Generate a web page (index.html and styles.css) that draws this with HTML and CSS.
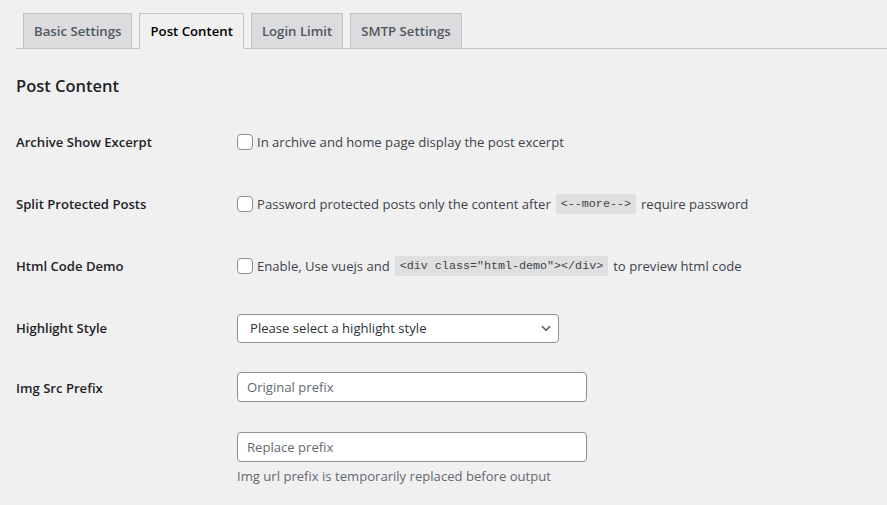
FILE: index.html
```html
<!DOCTYPE html>
<html lang="en">
<head>
<meta charset="utf-8">
<title>Post Content</title>
<link rel="stylesheet" href="styles.css">
</head>
<body>
<div class="wrap">
  <nav class="tabs">
    <a class="tab">Basic Settings</a>
    <a class="tab tab-active">Post Content</a>
    <a class="tab">Login Limit</a>
    <a class="tab">SMTP Settings</a>
  </nav>
  <h2 class="title">Post Content</h2>
  <div class="form">
    <div class="row">
      <div class="label">Archive Show Excerpt</div>
      <div class="field"><label class="check"><span class="box"></span>In archive and home page display the post excerpt</label></div>
    </div>
    <div class="row">
      <div class="label">Split Protected Posts</div>
      <div class="field"><label class="check"><span class="box"></span>Password protected posts only the content after <code>&lt;--more--&gt;</code> require password</label></div>
    </div>
    <div class="row">
      <div class="label">Html Code Demo</div>
      <div class="field"><label class="check"><span class="box"></span>Enable, Use vuejs and <code>&lt;div class="html-demo"&gt;&lt;/div&gt;</code> to preview html code</label></div>
    </div>
    <div class="row">
      <div class="label">Highlight Style</div>
      <div class="field">
        <div class="select">
          <span>Please select a highlight style</span>
          <svg class="chev" width="10" height="7" viewBox="0 0 10 7"><path d="M1 1.2 L5 5.2 L9 1.2" fill="none" stroke="#50575e" stroke-width="1.6"/></svg>
        </div>
      </div>
    </div>
    <div class="row row-last">
      <div class="label label-top">Img Src Prefix</div>
      <div class="field field-stack">
        <div class="input">Original prefix</div>
        <div class="input">Replace prefix</div>
        <p class="desc">Img url prefix is temporarily replaced before output</p>
      </div>
    </div>
  </div>
</div>
</body>
</html>
```

FILE: styles.css
```css
* { box-sizing: border-box; }
html, body { margin: 0; padding: 0; }
body {
  background: #f0f0f1;
  font-family: "Open Sans", "Noto Sans", sans-serif;
  color: #3c434a;
  width: 887px;
  height: 505px;
  overflow: hidden;
}
.wrap { padding: 13px 0 0 16px; }
.tabs {
  display: flex;
  border-bottom: 1px solid #c3c4c7;
  padding-left: 7px;
  gap: 7px;
  height: 36px;
}
.tab {
  display: block;
  height: 36px;
  padding: 0 10px;
  line-height: 34px;
  font-size: 13.2px;
  font-weight: 600;
  color: #50575e;
  background: #dcdcde;
  border: 1px solid #c3c4c7;
  white-space: nowrap;
}
.tab-active {
  background: #f0f0f1;
  color: #000;
  border-bottom-color: #f0f0f1;
}
.title {
  margin: 0;
  padding-top: 26px;
  font-size: 16.5px;
  line-height: 22px;
  font-weight: 600;
  color: #1d2327;
}
.form { padding-top: 14px; }
.row {
  display: grid;
  grid-template-columns: 221px 1fr;
  align-items: center;
  height: 62px;
}
.label {
  font-size: 13.1px;
  font-weight: 600;
  color: #1d2327;
  line-height: 18px;
}
.field { font-size: 13.1px; line-height: 18px; }
.check {
  display: flex;
  align-items: center;
  white-space: nowrap;
}
.box {
  width: 16px;
  height: 16px;
  border: 1px solid #8c8f94;
  border-radius: 4px;
  background: #fff;
  margin-right: 4px;
  flex: none;
}
code {
  font-family: "Liberation Mono", "DejaVu Sans Mono", monospace;
  font-size: 11.7px;
  line-height: 20px;
  background: rgba(0,0,0,0.07);
  padding: 0 5px;
  margin: 0 5px;
  color: #3c434a;
}
.select {
  width: 322px;
  height: 29px;
  border: 1px solid #8c8f94;
  border-radius: 4px;
  background: #fff;
  display: flex;
  align-items: center;
  justify-content: space-between;
  padding: 0 7px 0 12px;
  color: #2c3338;
}
.chev { display: block; }
.row-last { height: auto; align-items: start; }
.label-top { padding-top: 20px; }
.field-stack { padding-top: 13px; display: flex; flex-direction: column; }
.input {
  width: 350px;
  height: 30px;
  border: 1px solid #8c8f94;
  border-radius: 4px;
  background: #fff;
  padding: 0 9px;
  line-height: 28px;
  color: #646970;
  margin-bottom: 30px;
}
.input + .input { margin-bottom: 5px; }
.desc { margin: 0; color: #646970; }
```
